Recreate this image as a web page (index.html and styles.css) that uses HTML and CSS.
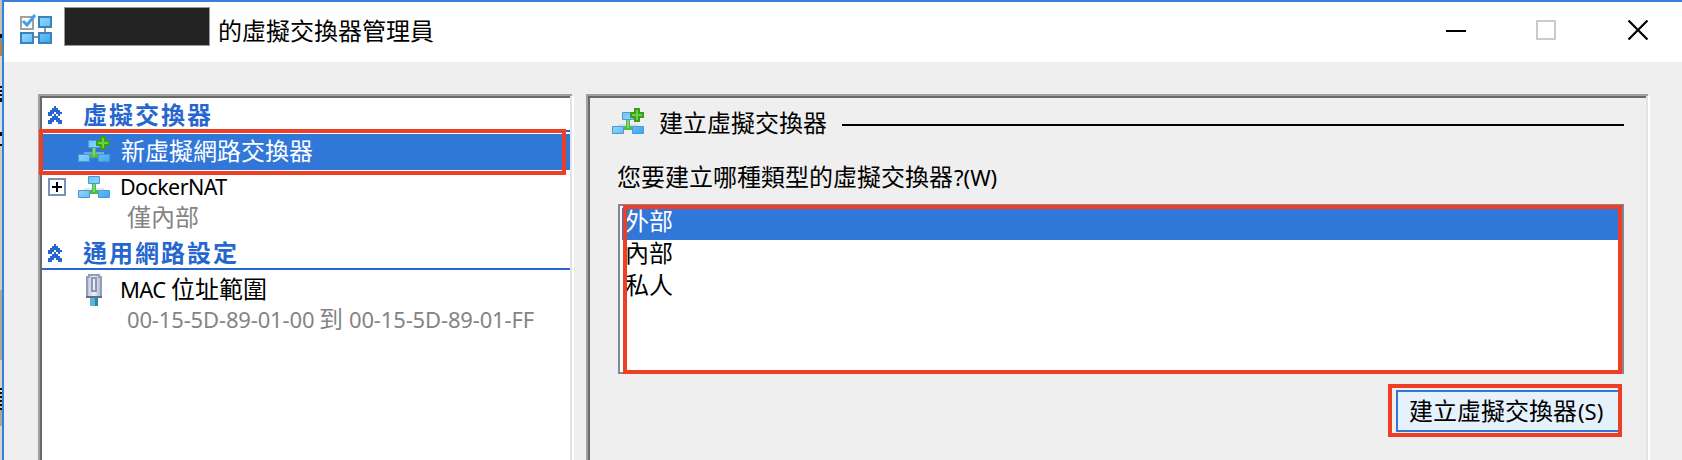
FILE: index.html
```html
<!DOCTYPE html>
<html lang="zh-Hant">
<head>
<meta charset="utf-8">
<title>虛擬交換器管理員</title>
<link rel="stylesheet" href="styles.css">
</head>
<body>
<svg class="defs" width="0" height="0">
  <defs>
    <linearGradient id="blue" x1="0" y1="0" x2="1" y2="1"><stop offset="0" stop-color="#5cb6f2"/><stop offset=".4" stop-color="#86d2ff"/><stop offset="1" stop-color="#3aa6f0"/></linearGradient>
    <linearGradient id="gray" x1="0" x2="1"><stop offset="0" stop-color="#b9c3d6"/><stop offset=".5" stop-color="#eef3fa"/><stop offset="1" stop-color="#aab4ca"/></linearGradient>
    <symbol id="net" viewBox="0 0 32 22">
      <path fill="#c9d3cf" opacity=".5" d="M6 12h20v2H6z"/>
      <path fill="#4cba4c" d="M14 8h4v6h2v4h-8v-4h2z"/>
      <path fill="#7bd67b" d="M15 8h2v8h-2z"/>
      <g fill="url(#blue)" stroke="#4a9ad0"><path d="M10.500.5h11v7h-11zM.5 14.500h11v7H.5zM20.500 14.500h11v7h-11z"/></g>
    </symbol>
    <symbol id="plus" viewBox="0 0 14 14">
      <path fill="#3f9a26" d="M4 0h6v4h4v6h-4v4H4v-4H0V4h4z"/>
      <path fill="#66d63c" d="M6 2h2v4h4v2H8v4H6V8H2V6h4z"/>
    </symbol>
    <symbol id="chev" viewBox="0 0 14 18">
      <path fill="#2667cf" d="M6 0h2v2h2v2h2v2h2v2h-2v2h2v0h-4V8H8V6H6v2H4v2H0V8h0V6h2V4h2V2h2zM6 8h2v2h2v2h2v2h2v4h-4v-2H8v-2H6v2H4v2H0v-4h2v-2h2v-2h2z"/>
    </symbol>
  </defs>
</svg>
<div class="desktop">
  <div class="behind"></div>
  <main class="window">
    <header class="titlebar">
      <svg class="app-icon" width="32" height="30" viewBox="0 0 32 30">
        <path fill="none" stroke="#949494" stroke-width="2" d="M25 12v6M14 23h4"/>
        <path fill="#fff" stroke="#a0a0a0" stroke-width="2" d="M1 3h12v12H1z"/>
        <path fill="none" stroke="#3f9ff0" stroke-width="3" d="M3 7l4 4 8-10"/>
        <g fill="url(#blue)" stroke="#3a82b8" stroke-width="2"><path d="M19 3h12v10H19zM1 19h12v10H1zM19 19h12v10H19z"/></g>
      </svg>
      <div class="redacted"></div>
      <h1 class="title">的虛擬交換器管理員</h1>
      <svg class="controls" width="202" height="20" viewBox="0 0 202 20">
        <path d="M0 10h20v2H0z"/>
        <path fill="none" stroke="#ccc" stroke-width="2" d="M91 1h18v18H91z"/>
        <path fill="none" stroke="#000" stroke-width="2.200" d="M182.500.5l19 19M201.500.5l-19 19"/>
      </svg>
    </header>
    <div class="content">
      <nav class="pane tree">
        <div class="group"><svg class="chev"><use href="#chev"/></svg><span>虛擬交換器</span></div>
        <div class="row selected"><svg class="icon"><use href="#net" y="4" width="32" height="22"/><use href="#plus" x="18" width="14" height="14"/></svg><span>新虛擬網路交換器</span></div>
        <div class="row docker"><span class="expander"></span><svg class="icon"><use href="#net" width="32" height="22"/></svg><span class="latin docker-name">DockerNAT</span></div>
        <div class="sub">僅內部</div>
        <div class="group"><svg class="chev"><use href="#chev"/></svg><span>通用網路設定</span></div>
        <div class="row mac">
          <svg class="plug" width="16" height="32" viewBox="0 0 16 32"><path fill="#5cb4d8" d="M4 24h8v8H4z"/><path fill="#2b86b4" d="M9 24h3v8H9z"/><path fill="url(#gray)" stroke="#929db8" stroke-width="2" d="M3 1h10v2h2v20H1V3h2z"/><path fill="#e9eff7" stroke="#8c96b0" stroke-width="2" d="M6 4h4v13H6z"/><path fill="#5d6f8c" d="M0 22h16v2H0z"/></svg>
          <span class="latin mac-name">MAC</span><span class="mac-range">位址範圍</span>
        </div>
        <div class="sub range"><span class="latin addr">00-15-5D-89-01-00</span><span>到</span><span class="latin addr">00-15-5D-89-01-FF</span></div>
        <div class="mark mark-tree"></div>
      </nav>
      <section class="pane detail">
        <div class="heading"><svg class="icon"><use href="#net" y="4" width="32" height="22"/><use href="#plus" x="18" width="14" height="14"/></svg><h2>建立虛擬交換器</h2><i class="rule"></i></div>
        <div class="question">您要建立哪種類型的虛擬交換器<span class="latin q-key">?(W)</span></div>
        <div class="listbox">
          <div class="option active">外部</div>
          <div class="option">內部</div>
          <div class="option">私人</div>
          <div class="mark mark-list"></div>
        </div>
        <div class="actions"><button class="create">建立虛擬交換器<span class="latin s-key">(S)</span></button><div class="mark mark-button"></div></div>
      </section>
    </div>
  </main>
</div>
</body>
</html>
```
FILE: styles.css
```css
* { box-sizing: border-box; }
body { margin: 0; overflow: hidden; font: 24px/32px "Noto Sans CJK TC", sans-serif; color: #000; background: #efefef; }
h1, h2 { margin: 0; font: inherit; }
span, h1, h2, .question, .sub { white-space: nowrap; }
svg { display: block; flex: none; }
.defs { position: absolute; }
.latin { font: 22px/32px "Noto Sans", sans-serif; }
.desktop { display: flex; width: 1682px; height: 460px; overflow: hidden; }
.behind { width: 2px; background: linear-gradient(#c5c2bc 0 34px, #111 34px 38px, #7f93a8 38px 42px, #ba8338 42px 56px, #d8d6ce 56px 86px, #111 86px 88px, #cde 88px 90px, #111 90px 92px, #cde 92px 94px, #111 94px 96px, #cde 96px 98px, #111 98px 102px, #d3e0ea 102px 132px, #111 132px 136px, #d8dad8 136px 144px, #111 144px 146px, #cfccc4 146px 290px, #aaa8a0 290px 360px, #d8d3c6 360px 388px, #111 388px 390px, #cde 390px 392px, #111 392px 394px, #cca 394px 396px, #111 396px 398px, #cca 398px 400px, #111 400px 402px, #cca 402px 404px, #111 404px 406px, #cca 406px 408px, #111 408px 410px, #aaa69b 410px 426px, #d4d4d0 426px); }
.window { flex: 1; border: solid #3580d9; border-width: 2px 0 0 2px; }
.titlebar { display: flex; height: 60px; background: #fff; padding-left: 16px; }
.app-icon { margin-top: 12px; }
.redacted { width: 146px; height: 39px; margin: 5px 0 0 12px; background: #232323; border: 1px solid #999; }
.title { margin: 12px 0 0 8px; }
.controls { margin: 18px 34px 0 auto; }
.content { display: flex; gap: 14px; padding: 32px 0 0 34px; }
.pane { position: relative; height: 400px; border: solid #a0a0a0; border-width: 2px 0 0 2px; box-shadow: inset -2px 0 #e3e3e3, inset 2px 2px #696969, 2px 2px #fff; padding: 2px; }
.tree { width: 534px; background: #fff; }
.detail { width: 1062px; }
.group { display: flex; height: 34px; border-bottom: 2px solid #2667cf; color: #2667cf; font-weight: 700; letter-spacing: 2px; }
.group span { margin: 0 0 0 21px; }
.chev { width: 14px; height: 18px; margin: 8px 0 0 6px; }
.row { display: flex; }
.icon { width: 32px; height: 26px; }
.selected { height: 36px; margin-top: 2px; padding: 2px 0 0 36px; background: #3177d8; color: #fff; }
.selected span { margin: -2px 0 0 11px; }
.docker { height: 32px; padding: 2px 0 0 6px; }
.docker .icon { margin: 4px 0 0 12px; }
.docker-name { margin: 0 0 0 10px; font-size: 21.5px; line-height: 30px; letter-spacing: -.6px; }
.expander { width: 18px; height: 18px; margin-top: 6px; border: 2px solid #7893b8; background: linear-gradient(#000, #000) 50% 50%/10px 2px no-repeat, linear-gradient(#000, #000) 50% 50%/2px 10px no-repeat, #fff; }
.sub { height: 34px; padding-left: 85px; color: #848484; line-height: 28px; }
.mac { height: 34px; padding: 4px 0 0 44px; }
.mac-name { width: 51px; margin: -1px 0 0 18px; letter-spacing: -.6px; }
.mac-range { margin-top: -2px; }
.range { display: flex; gap: 6px; }
.addr { width: 186px; line-height: 30px; letter-spacing: -.15px; }
.mark { position: absolute; border: 4px solid #ee3f26; }
.mark-tree { left: -1px; top: 33px; width: 527px; height: 46px; }
.heading { display: flex; height: 52px; padding: 10px 0 0 22px; }
.heading h2 { margin: -2px 15px 0 15px; }
.rule { width: 782px; height: 2px; margin-top: 16px; background: #000; }
.question { height: 54px; padding: 10px 0 0 27px; }
.q-key { margin-left: 1px; }
.listbox { position: relative; width: 1006px; height: 170px; margin-left: 28px; border: 2px solid #828790; padding: 2px; background: #fff; }
.option { height: 32px; padding-left: 3px; line-height: 23px; }
.active { background: #3177d8; color: #fff; }
.mark-list { left: 3px; top: -1px; width: 999px; height: 169px; }
.actions { position: relative; display: flex; width: 1034px; padding: 16px 0 0 806px; }
.create { display: flex; width: 226px; height: 42px; border: 2px solid #3177d8; background: #e5f1fb; padding: 2px 0 0 11px; font: inherit; color: #000; white-space: nowrap; }
.s-key { margin: 1px 0 0 1px; }
.mark-button { left: 798px; top: 10px; width: 234px; height: 53px; }
```
